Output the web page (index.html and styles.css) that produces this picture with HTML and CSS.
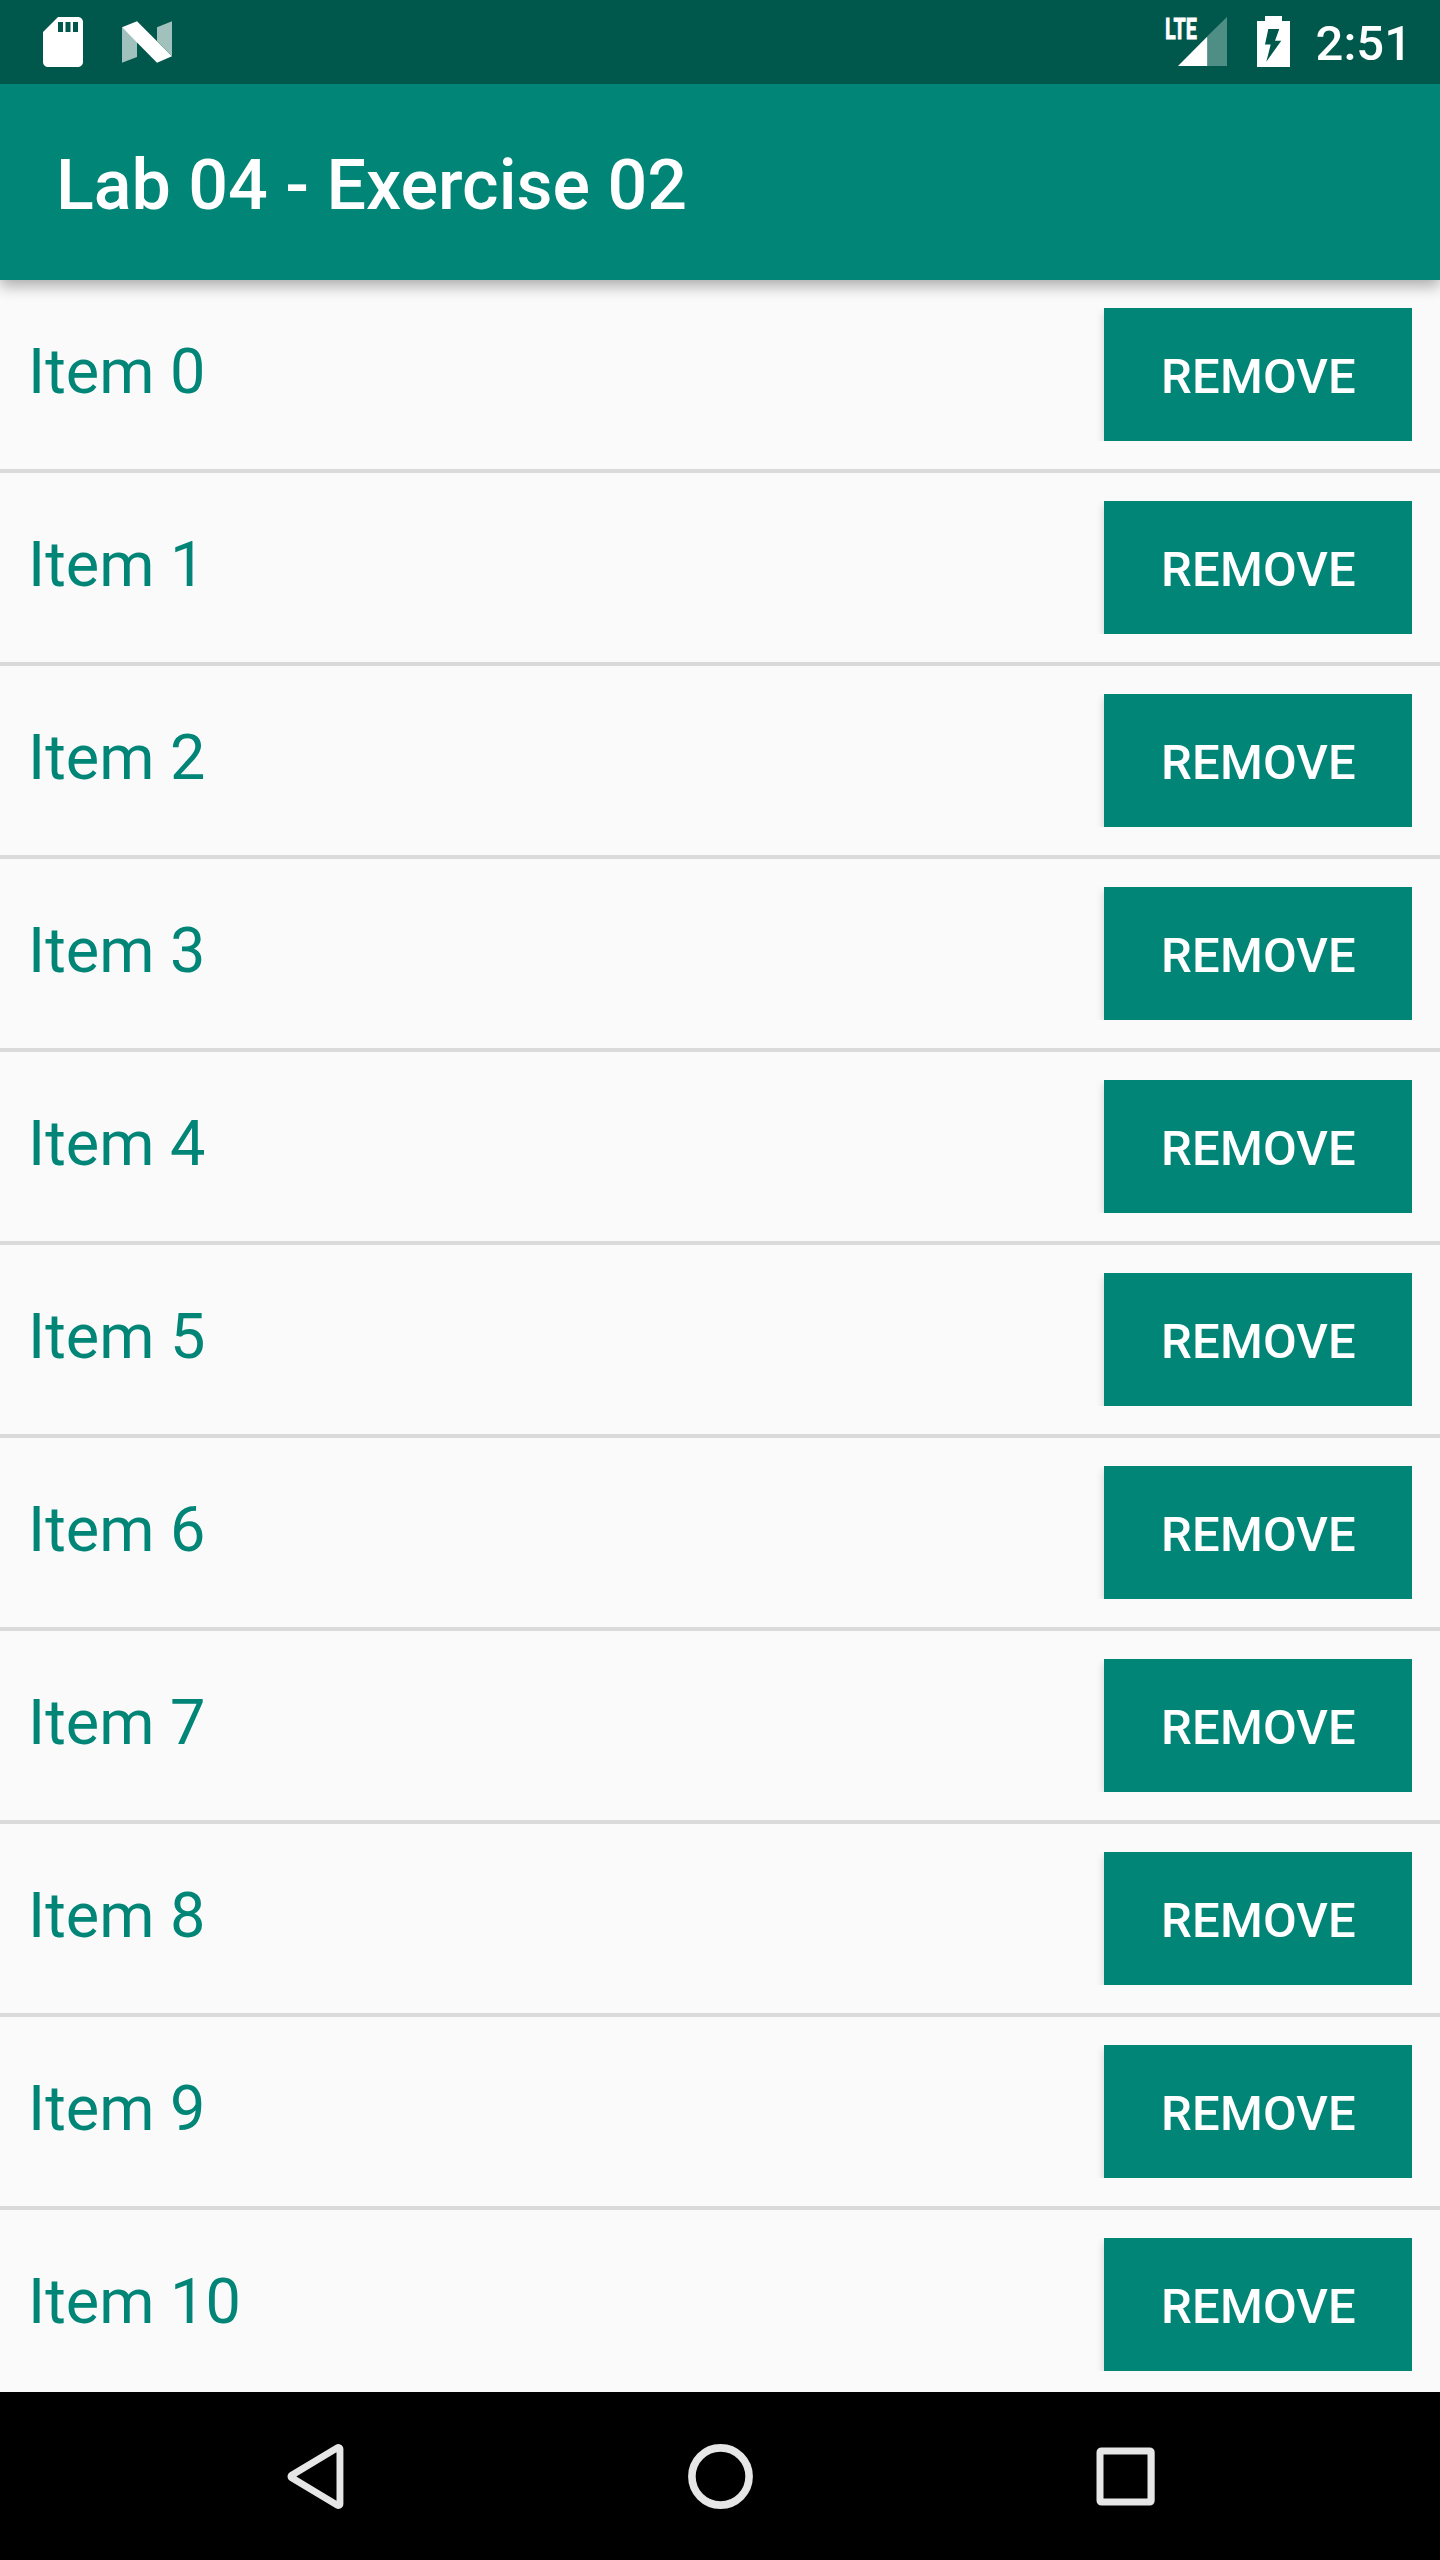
FILE: index.html
```html
<!DOCTYPE html>
<html lang="en">
<head>
<meta charset="utf-8">
<title>Lab 04 - Exercise 02</title>
<link rel="stylesheet" href="styles.css">
</head>
<body>
<div class="screen">
  <div class="status-bar">
    <svg class="icon-sd" width="60" height="60" viewBox="0 0 24 24"><path fill="#fff" d="M18 2h-8L4 8v12c0 1.100.9 2 2 2h12c1.100 0 2-.9 2-2V4c0-1.100-.9-2-2-2zm-6 6h-2V4h2v4zm3 0h-2V4h2v4zm3 0h-2V4h2v4z"/></svg>
    <svg class="icon-n" width="50" height="42" viewBox="0 0 50 42"><path fill="#a1c1bc" d="M0 6.300L15 20v16L0 41.700zM35 6.300L50 .3V35L35 20z"/><path fill="#fff" d="M0 6.300L15 .3l35 35-15 6.400z"/></svg>
    <div class="status-right">
      <svg class="icon-signal" width="64" height="52" viewBox="0 0 64 52"><path fill="#4f8e84" d="M44.500 20L64 1v49H44.500z"/><path fill="#fff" d="M15 50l29.300-29.500V50z"/><text class="lte" x="2" y="23" textLength="32" lengthAdjust="spacingAndGlyphs">LTE</text></svg>
      <svg class="icon-battery" width="33" height="51" viewBox="0 0 33 51"><path fill="#fff" fill-rule="evenodd" d="M8 0h17v5h8v46H0V5h8zM11.300 13L8 28.500h5.700L9.300 45.700l15-21H18L22.300 13z"/></svg>
      <span class="clock">2:51</span>
    </div>
  </div>
  <header class="app-bar"><h1 class="title">Lab 04 - Exercise 02</h1></header>
  <ul class="list">
    <li class="row"><span class="label">Item 0</span><button class="remove">REMOVE</button></li>
    <li class="row"><span class="label">Item 1</span><button class="remove">REMOVE</button></li>
    <li class="row"><span class="label">Item 2</span><button class="remove">REMOVE</button></li>
    <li class="row"><span class="label">Item 3</span><button class="remove">REMOVE</button></li>
    <li class="row"><span class="label">Item 4</span><button class="remove">REMOVE</button></li>
    <li class="row"><span class="label">Item 5</span><button class="remove">REMOVE</button></li>
    <li class="row"><span class="label">Item 6</span><button class="remove">REMOVE</button></li>
    <li class="row"><span class="label">Item 7</span><button class="remove">REMOVE</button></li>
    <li class="row"><span class="label">Item 8</span><button class="remove">REMOVE</button></li>
    <li class="row"><span class="label">Item 9</span><button class="remove">REMOVE</button></li>
    <li class="row"><span class="label">Item 10</span><button class="remove">REMOVE</button></li>
  </ul>
  <nav class="nav-bar">
    <svg width="84" height="84" viewBox="0 0 84 84"><path fill="#e6e6e6" stroke="#e6e6e6" stroke-width="10" stroke-linejoin="round" d="M19.500 42.500L65.400 15v55z"/><path d="M23.300 42.500l40.200-24.200v48.400z"/></svg>
    <svg width="84" height="84" viewBox="0 0 84 84"><circle cx="42.500" cy="42.500" r="28.600" fill="none" stroke="#e6e6e6" stroke-width="7.600"/></svg>
    <svg width="84" height="84" viewBox="0 0 84 84"><path fill="#e6e6e6" fill-rule="evenodd" d="M18.500 13.400h48.200a5 5 0 0 1 5 5v48.200a5 5 0 0 1-5 5H18.500a5 5 0 0 1-5-5V18.400a5 5 0 0 1 5-5zM20.500 20.500v44h44v-44z"/></svg>
  </nav>
</div>
</body>
</html>
```
FILE: styles.css
```css
body {
  margin: 0;
  font-family: Roboto, sans-serif;
}

.screen {
  display: flex;
  flex-direction: column;
  width: 1440px;
  height: 2560px;
  overflow: hidden;
  background: #fafafa;
}

.status-bar {
  display: flex;
  flex: none;
  align-items: center;
  box-sizing: border-box;
  height: 84px;
  padding: 0 28px 0 33px;
  background: #00574b;
}

.icon-n {
  margin-left: 29px;
}

.status-right {
  display: flex;
  align-items: flex-start;
  height: 52px;
  margin-left: auto;
}

.icon-signal {
  overflow: visible;
}

.lte {
  fill: #fff;
  stroke: #fff;
  stroke-width: 0.8px;
  font-size: 30px;
  font-weight: 700;
}

.icon-battery {
  margin-left: 30px;
}

.clock {
  margin-left: 26px;
  color: #fff;
  font-size: 49px;
  font-weight: 500;
  line-height: 56px;
}

.app-bar {
  display: flex;
  flex: none;
  align-items: center;
  height: 196px;
  padding-left: 56px;
  background: #008577;
  box-shadow: 0 6px 14px rgba(0, 0, 0, 0.32);
  clip-path: inset(0 0 -30px 0);
  z-index: 1;
}

.title {
  margin: 0;
  padding-top: 6px;
  color: #fff;
  font-size: 70px;
  font-weight: 500;
  line-height: 82px;
}

.list {
  flex: 1;
  min-height: 0;
  margin: 0;
  padding: 0;
  overflow: hidden;
  list-style: none;
}

.row {
  display: flex;
  align-items: flex-start;
  justify-content: space-between;
  box-sizing: border-box;
  height: 193px;
  padding: 28px;
  border-bottom: 4px solid #dadada;
}

.label {
  color: #008577;
  font-size: 63px;
  line-height: 74px;
  padding-top: 27px;
}

.remove {
  width: 308px;
  height: 133px;
  padding: 4px 0 0 1px;
  border: 0;
  background: #008577;
  color: #fff;
  font-family: inherit;
  font-size: 49px;
  font-weight: 500;
  letter-spacing: 0.15px;
  box-shadow: 0 4px 8px rgba(0, 0, 0, 0.18);
  clip-path: inset(0 0 0 -8px);
}

.nav-bar {
  display: flex;
  flex: none;
  align-items: center;
  justify-content: center;
  gap: 321px;
  height: 168px;
  background: #000;
}
```
